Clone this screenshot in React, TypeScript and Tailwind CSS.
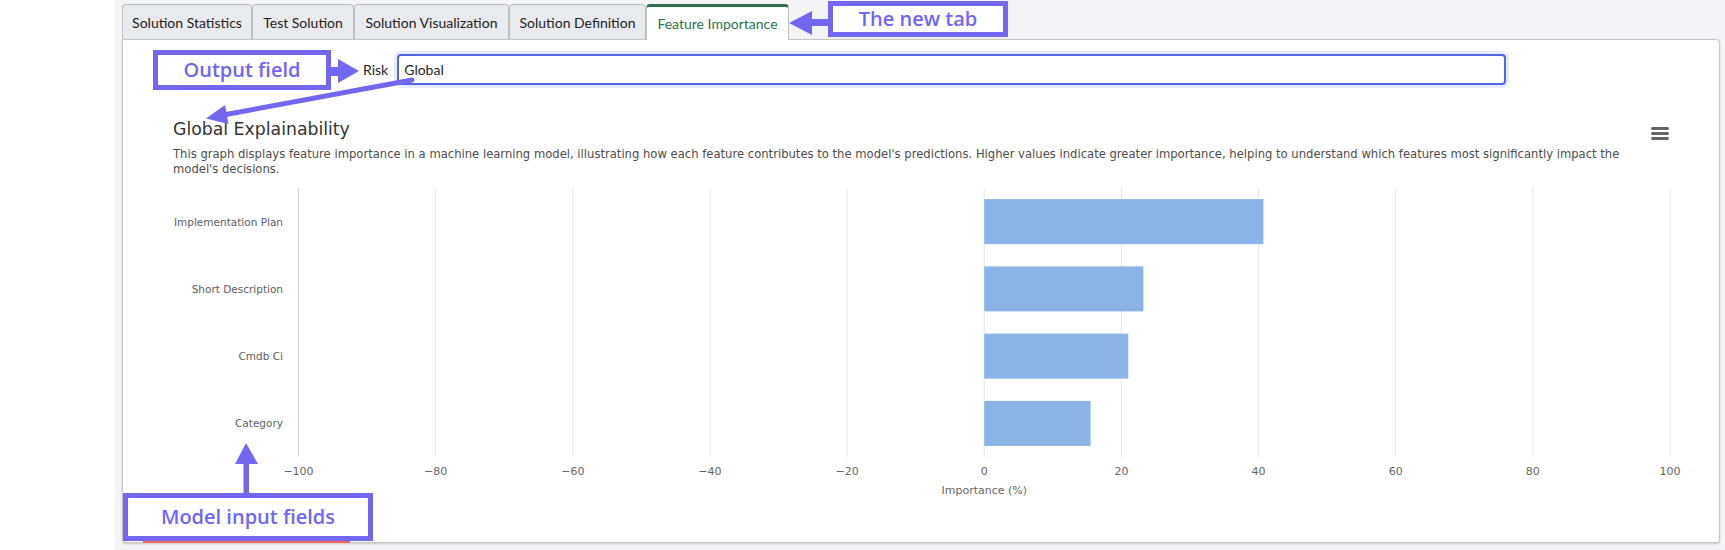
import React from "react";

const ticks = [-100, -80, -60, -40, -20, 0, 20, 40, 60, 80, 100];
const bars = [
  { label: "Implementation Plan", value: 40.7 },
  { label: "Short Description", value: 23.2 },
  { label: "Cmdb Ci", value: 21.0 },
  { label: "Category", value: 15.5 },
];

// chart svg origin is page (122,180)
const X0 = 175.5; // -100 gridline
const STEP = 137.15;
const xOf = (v: number) => X0 + ((v + 100) / 20) * STEP;

function Chart() {
  const zero = xOf(0);
  const bandTop = 8;
  const band = (277 - 8) / 4;
  return (
    <svg width="1596" height="320" className="block" style={{ fontFamily: "'DejaVu Sans', sans-serif" }}>
      {ticks.map((t, i) => (
        <line
          key={t}
          x1={xOf(t)}
          x2={xOf(t)}
          y1={8}
          y2={277}
          stroke={i === 0 ? "#ccd6eb" : "#e6e6e6"}
          strokeWidth={1}
        />
      ))}
      {bars.map((b, i) => {
        const yc = bandTop + band * i + band / 2;
        return (
          <g key={b.label}>
            <rect x={zero} y={yc - 22.5} width={b.value * (STEP / 20)} height={45} fill="#8ab3e6" />
            <text x={160} y={yc + 1} textAnchor="end" dominantBaseline="middle" fontSize="10.5" fill="#5e5e5e">
              {b.label}
            </text>
          </g>
        );
      })}
      {ticks.map((t) => (
        <text key={"l" + t} x={xOf(t)} y={292} textAnchor="middle" dominantBaseline="middle" fontSize="11" fill="#666666">
          {t < 0 ? "\u2212" + Math.abs(t) : t}
        </text>
      ))}
      <text x={zero} y={311} textAnchor="middle" dominantBaseline="middle" fontSize="11" fill="#666666">
        Importance (%)
      </text>
    </svg>
  );
}

const tabs = [
  { name: "Solution Statistics", w: "w-[130px]" },
  { name: "Test Solution", w: "w-[102px]" },
  { name: "Solution Visualization", w: "w-[155px]" },
  { name: "Solution Definition", w: "w-[137px]" },
];

function Annotations() {
  const c = "#7367f0";
  return (
    <>
      <svg className="absolute left-0 top-0 pointer-events-none" width="1725" height="550">
        {/* output field arrow */}
        <rect x="329" y="67" width="11" height="9" fill={c} />
        <polygon points="338,59 338,83 359,71" fill={c} />
        {/* new tab arrow */}
        <rect x="808" y="19" width="22" height="7" fill={c} />
        <polygon points="789,23 812,11 812,35" fill={c} />
        {/* long arrow */}
        <line x1="412" y1="80" x2="226" y2="114.5" stroke={c} strokeWidth="5" strokeLinecap="round" />
        <polygon points="206,118.5 228.5,124 225,105" fill={c} />
        {/* model input arrow */}
        <rect x="243.5" y="460" width="5.5" height="35" fill={c} />
        <polygon points="246,443 235,464 258,464" fill={c} />
      </svg>
      <div className="absolute left-[153px] top-[50px] w-[178px] h-[40px] border-[5px] border-[#7367f0] bg-white flex items-center justify-center text-[20px] font-semibold text-[#7165f6] leading-none" style={{ fontFamily: "'Open Sans', sans-serif" }}>
        Output field
      </div>
      <div className="absolute left-[828px] top-[1px] w-[180px] h-[36px] border-[5px] border-[#7367f0] bg-white flex items-center justify-center text-[20px] font-semibold text-[#7165f6] leading-none" style={{ fontFamily: "'Open Sans', sans-serif" }}>
        The new tab
      </div>
      <div className="absolute left-[143px] top-[540px] w-[207px] h-[3px] bg-[#f06a5a]" />
      <div className="absolute left-[123px] top-[493px] w-[250px] h-[48px] border-[5px] border-[#7367f0] bg-white flex items-center justify-center text-[20px] font-semibold text-[#7165f6] leading-none" style={{ fontFamily: "'Open Sans', sans-serif" }}>
        Model input fields
      </div>
    </>
  );
}

export default function App() {
  return (
    <div className="relative w-[1725px] h-[550px] bg-white flex overflow-hidden" style={{ fontFamily: "Lato, 'Open Sans', sans-serif" }}>
      <div className="w-[115px] shrink-0 bg-white" />
      <div className="flex-1 bg-[#f4f4f6] pt-[4px] pl-[7px] pr-[6px] flex flex-col">
        <div className="flex h-[35px] items-stretch">
          {tabs.map((t) => (
            <div
              key={t.name}
              className={`${t.w} shrink-0 bg-[#e9eaee] border border-b-0 border-[#bfc0c6] rounded-t-[4px] flex items-center justify-center text-[14px] text-[#222222]`}
            >
              {t.name}
            </div>
          ))}
          <div className="w-[143px] shrink-0 bg-white border border-b-0 border-[#bfc0c6] border-t-[3px] border-t-[#2f6f4e] rounded-t-[4px] flex items-center justify-center text-[14px] text-[#2d7450] relative z-10 -mb-px">
            Feature Importance
          </div>
        </div>
        <div className="h-[504px] bg-white border border-[#c6c6cb] rounded-tr-[4px] rounded-b-[3px] shadow-[0_1px_2px_rgba(0,0,0,0.18)] flex flex-col">
          <div className="flex items-center pl-[240px] pt-[14px]">
            <span className="text-[14px] text-[#1f1f1f] mr-[9px]">Risk</span>
            <div className="w-[1109px] h-[31px] rounded-[4px] border-2 border-[#5266e6] shadow-[0_0_0_3px_#e7eafc] flex items-center pl-[5px] text-[14px] text-[#1f1f1f]">
              Global
            </div>
          </div>
          <div className="flex pl-[50px] pr-[50px] pt-[32px]">
            <div className="flex-1">
              <div className="text-[17.3px] leading-[24px] text-[#333333]" style={{ fontFamily: "'DejaVu Sans', sans-serif" }}>
                Global Explainability
              </div>
              <div className="mt-[6px] text-[11.6px] leading-[15px] text-[#4d4d4d] whitespace-nowrap" style={{ fontFamily: "'DejaVu Sans', sans-serif" }}>
                This graph displays feature importance in a machine learning model, illustrating how each feature contributes to the model's predictions. Higher values indicate greater importance, helping to understand which features most significantly impact the
                <br />
                model's decisions.
              </div>
            </div>
            <div className="mt-[10px] w-[18px] flex flex-col gap-[2.5px]">
              <div className="h-[2.5px] bg-[#666666] rounded" />
              <div className="h-[2.5px] bg-[#666666] rounded" />
              <div className="h-[2.5px] bg-[#666666] rounded" />
            </div>
          </div>
          <div className="mt-[3px]">
            <Chart />
          </div>
        </div>
      </div>
      <Annotations />
    </div>
  );
}
